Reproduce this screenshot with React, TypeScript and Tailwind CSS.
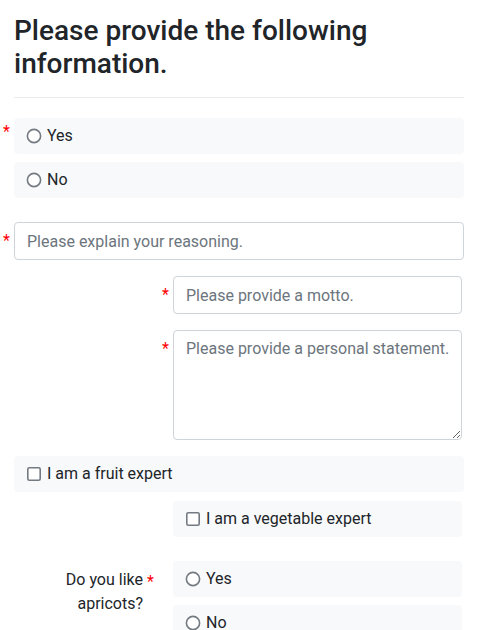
import React from "react";

const Star = ({ className }: { className: string }) => (
  <span className={`absolute text-[16px] leading-none text-[#ff0000] ${className}`}>*</span>
);

const Radio = ({ label }: { label: string }) => (
  <div className="flex h-[36px] items-center rounded-[4px] bg-[#f8f9fa] pl-[12px]">
    <svg width="16" height="16" viewBox="0 0 16 16" className="shrink-0">
      <circle cx="8" cy="8" r="6.6" fill="#fff" stroke="#737a81" strokeWidth="1.6" />
    </svg>
    <span className="ml-[5px] text-[16px] leading-6 text-[#212529]">{label}</span>
  </div>
);

const Check = ({ label }: { label: string }) => (
  <div className="flex h-[36px] items-center rounded-[4px] bg-[#f8f9fa] pl-[13px]">
    <svg width="14" height="14" viewBox="0 0 14 14" className="shrink-0">
      <rect x="0.8" y="0.8" width="12.4" height="12.4" rx="1.5" fill="#fff" stroke="#737a81" strokeWidth="1.6" />
    </svg>
    <span className="ml-[6px] text-[16px] leading-6 text-[#212529]">{label}</span>
  </div>
);

export default function App() {
  return (
    <div
      className="min-h-[630px] bg-white px-[14px] pt-[14px] text-[#212529]"
      style={{ fontFamily: "Roboto, 'Liberation Sans', sans-serif" }}
    >
      <h1 className="text-[28px] font-medium leading-[33px] text-[#212529]">
        Please provide the following information.
      </h1>
      <div className="mt-[17px] h-px bg-[#e9ecef]" />

      <div className="relative mt-[20px] flex flex-col gap-[8px]">
        <Star className="-left-[11px] top-[6px]" />
        <Radio label="Yes" />
        <Radio label="No" />
      </div>

      <div className="relative mt-[24px]">
        <Star className="-left-[11px] top-[11px]" />
        <input
          className="box-border h-[38px] w-full rounded-[4px] border border-[#ced4da] bg-white px-[12px] text-[16px] outline-none placeholder:text-[#6c757d]"
          placeholder="Please explain your reasoning."
        />
      </div>

      <div className="relative mt-[16px] flex">
        <div className="w-[159px] shrink-0" />
        <Star className="left-[148px] top-[11px]" />
        <input
          className="box-border h-[38px] w-[289px] rounded-[4px] border border-[#ced4da] bg-white px-[12px] text-[16px] outline-none placeholder:text-[#6c757d]"
          placeholder="Please provide a motto."
        />
      </div>

      <div className="relative mt-[16px] flex">
        <div className="w-[159px] shrink-0" />
        <Star className="left-[148px] top-[11px]" />
        <textarea
          className="box-border block h-[110px] w-[289px] resize-y overflow-hidden whitespace-nowrap rounded-[4px] border border-[#ced4da] bg-white py-[6px] pl-[12px] pr-[4px] text-[16px] leading-6 outline-none placeholder:text-[#6c757d]"
          placeholder="Please provide a personal statement."
        />
      </div>

      <div className="mt-[16px]">
        <Check label="I am a fruit expert" />
      </div>

      <div className="mt-[9px] flex">
        <div className="w-[159px] shrink-0" />
        <div className="w-[289px]">
          <Check label="I am a vegetable expert" />
        </div>
      </div>

      <div className="mt-[24px] flex">
        <div className="relative w-[159px] shrink-0 pr-[30px] pt-[7px] text-right text-[16px] leading-6 text-[#212529]">
          <div className="ml-auto w-[100px]">Do you like apricots?</div>
          <Star className="left-[133px] top-[13px]" />
        </div>
        <div className="flex w-[289px] flex-col gap-[8px]">
          <Radio label="Yes" />
          <Radio label="No" />
        </div>
      </div>
    </div>
  );
}
